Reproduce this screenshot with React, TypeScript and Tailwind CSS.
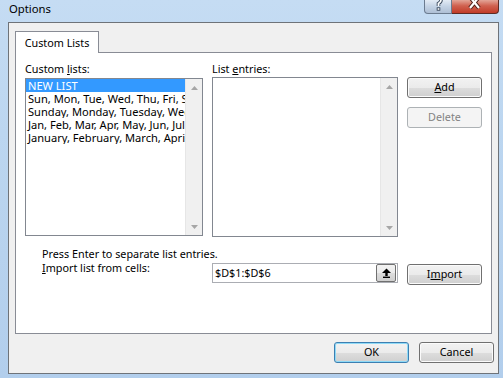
import clsx from 'clsx';

const LISTS = [
  'NEW LIST',
  'Sun, Mon, Tue, Wed, Thu, Fri, Sat',
  'Sunday, Monday, Tuesday, Wednesday, Thursday, Friday, Saturday',
  'Jan, Feb, Mar, Apr, May, Jun, Jul, Aug, Sep, Oct, Nov, Dec',
  'January, February, March, April, May, June, July, August, September, October, November, December',
];

function ScrollBar() {
  return (
    <div className="flex w-[17px] shrink-0 flex-col justify-between border-l border-[#e6e6e6] bg-[#f0f0f0]">
      <div className="flex h-[17px] items-center justify-center">
        <svg width="7" height="4" viewBox="0 0 7 4">
          <path d="M0 4 L3.5 0 L7 4Z" fill="#a6a6a6" />
        </svg>
      </div>
      <div className="flex h-[17px] items-center justify-center">
        <svg width="7" height="4" viewBox="0 0 7 4">
          <path d="M0 0 L3.5 4 L7 0Z" fill="#a6a6a6" />
        </svg>
      </div>
    </div>
  );
}

function Button({
  children,
  disabled,
  isDefault,
  className,
}: {
  children: React.ReactNode;
  disabled?: boolean;
  isDefault?: boolean;
  className?: string;
}) {
  return (
    <div
      className={clsx(
        'flex h-[21px] w-[75px] shrink-0 items-center justify-center rounded-[3px] border leading-none',
        disabled
          ? 'border-[#adb2b5] bg-[#f4f4f4] text-[#838383]'
          : isDefault
            ? 'border-[#3c7fb1] bg-[linear-gradient(#f2f2f2_0%,#ebebeb_50%,#dddddd_51%,#cfcfcf_100%)] shadow-[inset_0_0_0_1px_#8fdaf7]'
            : 'border-[#707070] bg-[linear-gradient(#f2f2f2_0%,#ebebeb_50%,#dddddd_51%,#cfcfcf_100%)] shadow-[inset_0_0_0_1px_#fbfbfb]',
        className,
      )}
    >
      {children}
    </div>
  );
}

export default function App() {
  return (
    <div className="h-[378px] w-[503px] overflow-hidden bg-[linear-gradient(180deg,#c5dcf3_0%,#bcd6f0_35%,#b2ceec_100%)] font-['Noto_Sans',sans-serif] text-[10.8px] text-black">
      {/* Title bar */}
      <div className="flex h-[22px]">
        <div className="pl-[9px] pt-[1px] text-[11.3px] leading-[15px]">Options</div>
        <div className="mr-[4px] ml-auto flex h-[14px]">
          <div className="flex h-[14px] w-[28px] justify-center overflow-hidden rounded-bl-[4px] border border-t-0 border-[#6b7b8f] bg-[linear-gradient(#e3ebf5,#c3d2e4_50%,#aebfd5)]">
            <svg width="12" height="11" viewBox="0 0 12 11">
              <path
                d="M3 -1 Q3 -3 6 -3 Q9 -3 9 0 Q9 2 6.5 3.5 L6.5 6"
                fill="none"
                stroke="#3b4a5e"
                strokeWidth="3.6"
              />
              <path
                d="M3 -1 Q3 -3 6 -3 Q9 -3 9 0 Q9 2 6.5 3.5 L6.5 6"
                fill="none"
                stroke="#fff"
                strokeWidth="1.8"
              />
              <rect x="4.7" y="7.3" width="3.6" height="3.4" fill="#3b4a5e" />
              <rect x="5.6" y="8.2" width="1.8" height="1.6" fill="#fff" />
            </svg>
          </div>
          <div className="flex h-[14px] w-[47px] justify-center overflow-hidden rounded-br-[4px] border border-t-0 border-l-0 border-[#5e2b24] bg-[linear-gradient(#e3a597,#d0614f_45%,#c13b28)]">
            <svg width="14" height="11" viewBox="0 0 14 11">
              <path d="M2 -3 L11 8 M11 -3 L2 8" stroke="#4d1e17" strokeWidth="4.2" />
              <path d="M2 -3 L11 8 M11 -3 L2 8" stroke="#fff" strokeWidth="2.2" />
            </svg>
          </div>
        </div>
      </div>

      {/* Client area */}
      <div className="ml-[8px] h-[352px] w-[491px] border border-[#6e7379] bg-[#f0f0f0]">
        {/* Tab */}
        <div className="relative z-10 mt-[8px] ml-[6px] flex h-[22px] w-[84px] items-center justify-center border border-b-0 border-[#898c95] bg-white pt-[2px]">
          Custom Lists
        </div>

        {/* Tab panel */}
        <div className="-mt-px ml-[6px] h-[282px] w-[477px] border border-[#898c95] bg-white">
          <div className="flex h-[185px] pt-[9px] pl-[9px]">
            {/* Custom lists */}
            <div className="w-[178px]">
              <div className="h-[14px] leading-[14px]">
                Custom <span className="underline">l</span>ists:
              </div>
              <div className="mt-[2px] flex h-[158px] border border-[#828790] bg-white">
                <div className="min-w-0 flex-1 overflow-hidden">
                  {LISTS.map((item, i) => (
                    <div
                      key={item}
                      className={clsx(
                        'h-[13px] overflow-hidden pl-[2px] text-[11.1px] leading-[13px] whitespace-nowrap',
                        i === 0 && 'bg-[#3399ff] text-white',
                      )}
                    >
                      {item}
                    </div>
                  ))}
                </div>
                <ScrollBar />
              </div>
            </div>

            {/* List entries */}
            <div className="ml-[9px] w-[186px]">
              <div className="h-[14px] leading-[14px]">
                List <span className="underline">e</span>ntries:
              </div>
              <div className="mt-px flex h-[160px] border border-[#828790] bg-white">
                <div className="flex-1" />
                <ScrollBar />
              </div>
            </div>

            {/* Add / Delete */}
            <div className="mt-[15px] ml-[9px] flex flex-col gap-[9px]">
              <Button>
                <span>
                  <span className="underline">A</span>dd
                </span>
              </Button>
              <Button disabled>Delete</Button>
            </div>
          </div>

          <div className="mt-[9px] h-[13px] pl-[26px] leading-[13px]">
            Press Enter to separate list entries.
          </div>

          <div className="mt-[3px] flex pl-[26px]">
            <div className="-mt-[2px] h-[13px] w-[170px] leading-[13px]">
              <span className="underline">I</span>mport list from cells:
            </div>
            <div className="flex h-[20px] w-[186px] items-center border border-[#abadb3] bg-white pr-px">
              <div className="flex-1 pl-[2px] leading-[18px]">$D$1:$D$6</div>
              <div className="flex h-[18px] w-[20px] items-center justify-center rounded-[2px] border border-[#707070] bg-[linear-gradient(#f2f2f2_0%,#ebebeb_50%,#dddddd_51%,#cfcfcf_100%)]">
                <svg width="9" height="10" viewBox="0 0 9 10">
                  <path d="M0 5 L4.5 0.5 L9 5Z" fill="#000" />
                  <rect x="3.3" y="4.5" width="2.4" height="3.5" fill="#000" />
                  <rect x="1" y="8.6" width="7" height="1.4" fill="#000" />
                </svg>
              </div>
            </div>
            <Button className="mt-px ml-[9px]">
              <span>
                I<span className="underline">m</span>port
              </span>
            </Button>
          </div>
        </div>

        {/* Dialog buttons */}
        <div className="mt-[8px] flex justify-end gap-[10px] pr-[4px]">
          <Button isDefault>OK</Button>
          <Button>Cancel</Button>
        </div>
      </div>
    </div>
  );
}
